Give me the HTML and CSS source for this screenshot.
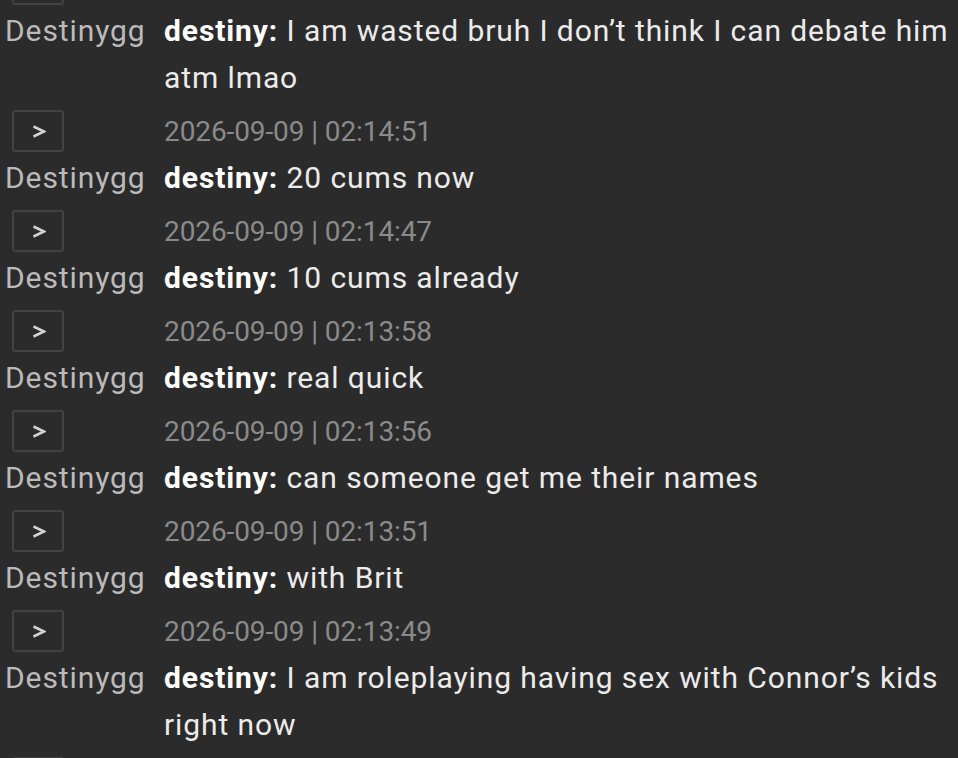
FILE: index.html
```html
<!DOCTYPE html>
<html>
<head>
<meta charset="utf-8">
<link rel="stylesheet" href="styles.css">
</head>
<body>
<div class="log">
  <div class="entry">
    <div class="meta"><span class="btn"><svg width="14" height="13" viewBox="0 0 14 13"><polyline points="1.5,1.5 12,6.5 1.5,11.5" fill="none" stroke="#d2d2d2" stroke-width="2.6" stroke-linejoin="miter"/></svg></span><span class="ts">2026-09-09 | 02:14:55</span></div>
    <div class="msg"><span class="who">Destinygg</span><span class="text"><b>destiny:</b> I am wasted bruh I don’t think I can debate him atm lmao</span></div>
  </div>
  <div class="entry">
    <div class="meta"><span class="btn"><svg width="14" height="13" viewBox="0 0 14 13"><polyline points="1.5,1.5 12,6.5 1.5,11.5" fill="none" stroke="#d2d2d2" stroke-width="2.6" stroke-linejoin="miter"/></svg></span><span class="ts">2026-09-09 | 02:14:51</span></div>
    <div class="msg"><span class="who">Destinygg</span><span class="text"><b>destiny:</b> 20 cums now</span></div>
  </div>
  <div class="entry">
    <div class="meta"><span class="btn"><svg width="14" height="13" viewBox="0 0 14 13"><polyline points="1.5,1.5 12,6.5 1.5,11.5" fill="none" stroke="#d2d2d2" stroke-width="2.6" stroke-linejoin="miter"/></svg></span><span class="ts">2026-09-09 | 02:14:47</span></div>
    <div class="msg"><span class="who">Destinygg</span><span class="text"><b>destiny:</b> 10 cums already</span></div>
  </div>
  <div class="entry">
    <div class="meta"><span class="btn"><svg width="14" height="13" viewBox="0 0 14 13"><polyline points="1.5,1.5 12,6.5 1.5,11.5" fill="none" stroke="#d2d2d2" stroke-width="2.6" stroke-linejoin="miter"/></svg></span><span class="ts">2026-09-09 | 02:13:58</span></div>
    <div class="msg"><span class="who">Destinygg</span><span class="text"><b>destiny:</b> real quick</span></div>
  </div>
  <div class="entry">
    <div class="meta"><span class="btn"><svg width="14" height="13" viewBox="0 0 14 13"><polyline points="1.5,1.5 12,6.5 1.5,11.5" fill="none" stroke="#d2d2d2" stroke-width="2.6" stroke-linejoin="miter"/></svg></span><span class="ts">2026-09-09 | 02:13:56</span></div>
    <div class="msg"><span class="who">Destinygg</span><span class="text"><b>destiny:</b> can someone get me their names</span></div>
  </div>
  <div class="entry">
    <div class="meta"><span class="btn"><svg width="14" height="13" viewBox="0 0 14 13"><polyline points="1.5,1.5 12,6.5 1.5,11.5" fill="none" stroke="#d2d2d2" stroke-width="2.6" stroke-linejoin="miter"/></svg></span><span class="ts">2026-09-09 | 02:13:51</span></div>
    <div class="msg"><span class="who">Destinygg</span><span class="text"><b>destiny:</b> with Brit</span></div>
  </div>
  <div class="entry">
    <div class="meta"><span class="btn"><svg width="14" height="13" viewBox="0 0 14 13"><polyline points="1.5,1.5 12,6.5 1.5,11.5" fill="none" stroke="#d2d2d2" stroke-width="2.6" stroke-linejoin="miter"/></svg></span><span class="ts">2026-09-09 | 02:13:49</span></div>
    <div class="msg"><span class="who">Destinygg</span><span class="text"><b>destiny:</b> I am roleplaying having sex with Connor’s kids right now</span></div>
  </div>
  <div class="entry">
    <div class="meta"><span class="btn"><svg width="14" height="13" viewBox="0 0 14 13"><polyline points="1.5,1.5 12,6.5 1.5,11.5" fill="none" stroke="#d2d2d2" stroke-width="2.6" stroke-linejoin="miter"/></svg></span><span class="ts">2026-09-09 | 02:13:40</span></div>
  </div>
</div>
</body>
</html>
```

FILE: styles.css
```css
html, body {
  margin: 0;
  padding: 0;
  background: #2b2b2b;
  overflow: hidden;
}
body {
  font-family: Roboto, "Liberation Sans", sans-serif;
  font-size: 30px;
}
.log {
  margin-top: -39px;
  padding-left: 5px;
}
.entry {
  display: flex;
  flex-direction: column;
}
.meta {
  display: flex;
  align-items: center;
  height: 46px;
}
.btn {
  box-sizing: border-box;
  width: 52px;
  height: 42px;
  margin-left: 7px;
  border: 2px solid #424242;
  border-radius: 3px;
  display: flex;
  align-items: center;
  justify-content: center;
}
.btn svg {
  display: block;
  margin-left: 1px;
}
.ts {
  margin-left: 100px;
  padding-top: 1px;
  color: #8a8a8a;
  font-size: 28px;
  letter-spacing: -0.1px;
  line-height: 46px;
}
.msg {
  display: grid;
  grid-template-columns: 159px 1fr;
  line-height: 47px;
  padding-bottom: 7px;
  letter-spacing: 0.9px;
}
.who {
  color: #bababa;
}
.text {
  color: #ebebeb;
  padding-right: 6px;
}
.text b {
  color: #ffffff;
  font-weight: 700;
}
```
